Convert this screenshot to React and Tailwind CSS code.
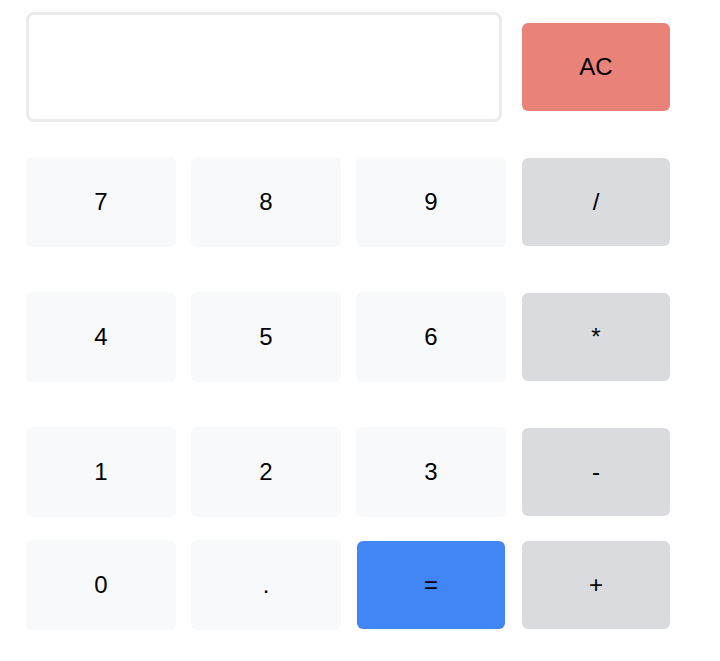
import React from "react";

const font = { fontFamily: '"Liberation Sans", Arial, sans-serif' };

function Num({ label }) {
  return (
    <div className="w-[150px] h-[90px] rounded-md bg-[#f8f9fa] flex items-center justify-center text-[24px] text-black">
      {label}
    </div>
  );
}

function Op({ label, color = "bg-[#dadbde]" }) {
  return (
    <div className="w-[150px] h-[90px] p-px">
      <div className={`w-full h-full rounded-md ${color} flex items-center justify-center text-[24px] text-black`}>
        {label}
      </div>
    </div>
  );
}

export default function App() {
  return (
    <div className="w-[720px] h-[661px] bg-white pl-[26px] pt-[12px] flex flex-col" style={font}>
      <div className="flex items-center gap-[19px]">
        <div className="w-[476px] h-[110px] border-[3px] border-[#ebebeb] rounded-lg bg-white"></div>
        <div className="w-[150px] h-[90px] p-px">
          <div className="w-full h-full rounded-md bg-[#e9837a] flex items-center justify-center text-[24px] text-black">AC</div>
        </div>
      </div>
      <div className="flex gap-[15px] mt-[35px]">
        <Num label="7" />
        <Num label="8" />
        <Num label="9" />
        <Op label="/" />
      </div>
      <div className="flex gap-[15px] mt-[45px]">
        <Num label="4" />
        <Num label="5" />
        <Num label="6" />
        <Op label="*" />
      </div>
      <div className="flex gap-[15px] mt-[45px]">
        <Num label="1" />
        <Num label="2" />
        <Num label="3" />
        <Op label="-" />
      </div>
      <div className="flex gap-[15px] mt-[23px]">
        <Num label="0" />
        <Num label="." />
        <Op label="=" color="bg-[#4285f4]" />
        <Op label="+" />
      </div>
    </div>
  );
}
